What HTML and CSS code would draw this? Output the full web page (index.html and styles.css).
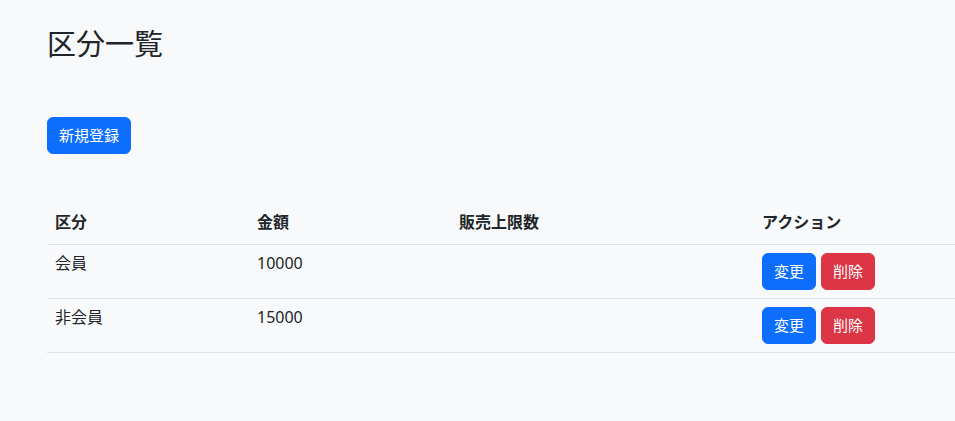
FILE: index.html
```html
<!DOCTYPE html>
<html lang="ja">
<head>
    <meta charset="UTF-8">
    <meta name="viewport" content="width=device-width, initial-scale=1.0">
    <title>区分一覧</title>
    <link rel="stylesheet" href="styles.css">
</head>
<body>
    <div class="container">
        <h1>区分一覧</h1>
        <a href="#" class="btn btn-primary btn-new">新規登録</a>

        <table class="table">
            <thead>
                <tr>
                    <th class="col-name">区分</th>
                    <th class="col-price">金額</th>
                    <th class="col-limit">販売上限数</th>
                    <th class="col-action">アクション</th>
                </tr>
            </thead>
            <tbody>
                <tr>
                    <td>会員</td>
                    <td>10000</td>
                    <td></td>
                    <td class="cell-action">
                        <div class="actions">
                            <a href="#" class="btn btn-primary">変更</a>
                            <button class="btn btn-danger">削除</button>
                        </div>
                    </td>
                </tr>
                <tr>
                    <td>非会員</td>
                    <td>15000</td>
                    <td></td>
                    <td class="cell-action">
                        <div class="actions">
                            <a href="#" class="btn btn-primary">変更</a>
                            <button class="btn btn-danger">削除</button>
                        </div>
                    </td>
                </tr>
            </tbody>
        </table>
    </div>
</body>
</html>
```

FILE: styles.css
```css
/* page */
body {
    margin: 0;
    background-color: #f8f9fa;
    color: #212529;
    font-family: "Noto Sans", "Noto Sans CJK JP", sans-serif;
    font-size: 16px;
    line-height: 1.5;
    overflow: hidden;
}

.container {
    padding: 27px 0 0 47px;
}

h1 {
    margin: 0 0 56px;
    font-size: 29px;
    font-weight: 400;
    line-height: 34px;
}

/* buttons */
.btn {
    display: inline-block;
    padding: 6px 11px;
    border: 1px solid transparent;
    border-radius: 6px;
    font-family: inherit;
    font-size: 15px;
    line-height: 23px;
    color: white;
    text-decoration: none;
    cursor: pointer;
}

.btn-primary {
    background-color: #0d6efd;
    border-color: #0d6efd;
}

.btn-danger {
    background-color: #dc3545;
    border-color: #dc3545;
}

.btn-new {
    margin-bottom: 50px;
}

/* table */
.table {
    width: 1010px;
    border-collapse: collapse;
}

.table th,
.table td {
    padding: 6px 8px 10px;
    text-align: left;
    vertical-align: top;
    border-bottom: 1px solid #dee2e6;
}

.table th {
    font-weight: 700;
}

.table .cell-action {
    padding: 8px;
}

.col-name,
.col-price {
    width: 20%;
}

.col-limit,
.col-action {
    width: 30%;
}

.actions {
    display: flex;
    gap: 5px;
}
```
